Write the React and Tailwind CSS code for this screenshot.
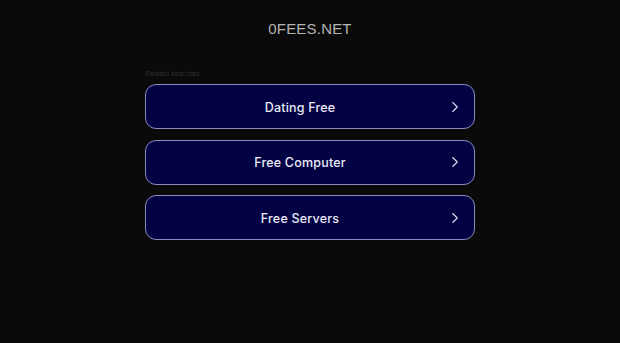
import { ChevronRight } from 'lucide-react';

const searches = ["Dating Free", "Free Computer", "Free Servers"];

export default function App() {
  return (
    <div className="min-h-[343px] w-full bg-[#0a0a0a] font-['Liberation_Sans',Arial,sans-serif]">
      <div className="pt-[20px] text-center text-[15px] leading-[18px] tracking-[0.2px] text-[#b3b3b3]">
        0FEES.NET
      </div>
      <div className="mx-auto mt-[32px] w-[330px]">
        <div className="mb-[6px] text-[7px] leading-[8px] text-[#2e2e2e]">Related searches</div>
        <div className="flex flex-col gap-[10.5px]">
          {searches.map((s) => (
            <a
              key={s}
              href="#"
              className="flex h-[45px] items-center rounded-[11px] border border-[#8b8bbf] bg-[#030343] pl-[12px] pr-[10px] font-['Inter',sans-serif] text-[12.5px] font-medium text-[#eaeaf8]"
            >
              <span className="flex-1 pt-[2px] text-center leading-[16px] tracking-[0.2px]">{s}</span>
              <span className="flex w-[22px] justify-end">
                <ChevronRight className="h-[18px] w-[18px] text-[#dcdcf0]" strokeWidth={1.5} />
              </span>
            </a>
          ))}
        </div>
      </div>
    </div>
  );
}
